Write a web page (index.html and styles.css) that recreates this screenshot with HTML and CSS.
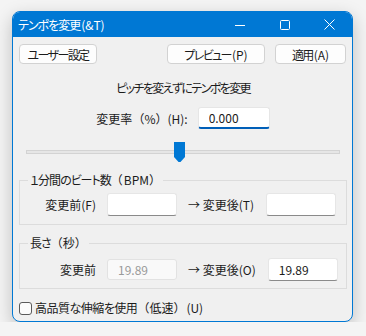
FILE: index.html
```html
<!DOCTYPE html>
<html lang="ja">
<head>
  <meta charset="UTF-8" />
  <title>テンポを変更</title>
  <link rel="stylesheet" href="styles.css">
</head>
<body>
  <div class="window">
    <div class="titlebar">
      <span class="title">テンポを変更<span class="lat">(&amp;T)</span></span>
      <div class="caption">
        <span class="cap-btn">
          <svg width="10" height="10" viewBox="0 0 10 10"><path d="M0 5.5 H10" stroke="#fff" stroke-width="1"/></svg>
        </span>
        <span class="cap-btn">
          <svg width="10" height="10" viewBox="0 0 10 10"><rect x="0.5" y="0.5" width="9" height="9" rx="1" fill="none" stroke="#fff" stroke-width="1"/></svg>
        </span>
        <span class="cap-btn">
          <svg width="11" height="11" viewBox="0 0 11 11"><path d="M0.5 0.5 L10.5 10.5 M10.5 0.5 L0.5 10.5" stroke="#fff" stroke-width="1"/></svg>
        </span>
      </div>
    </div>

    <div class="content">
      <div class="button-row">
        <button class="btn btn-user">ユーザー設定</button>
        <span class="spacer"></span>
        <button class="btn btn-preview">プレビュー<span class="lat">(P)</span></button>
        <button class="btn btn-apply">適用<span class="lat">(A)</span></button>
      </div>

      <p class="subtitle">ピッチを変えずにテンポを変更</p>

      <div class="rate-row">
        <label for="rate">変更率<span class="fw">（%）</span>(H):</label>
        <input type="text" id="rate" class="textbox focused" value="0.000" />
      </div>

      <div class="slider">
        <div class="track"></div>
        <svg class="thumb" style="left: 148px" width="11" height="20" viewBox="0 0 11 20"><path d="M0 0 H11 V15 L6.5 20 H4.5 L0 15 Z" fill="#0078d4"/></svg>
      </div>

      <fieldset class="group group-bpm">
        <legend>１分間のビート数<span class="fw">（</span><span class="lat">BPM</span><span class="fw">）</span></legend>
        <div class="field-row">
          <label for="bpmFrom" class="field-label">変更前(F)</label>
          <input type="text" id="bpmFrom" class="textbox" value="" />
          <label for="bpmTo" class="arrow-label">→ 変更後(T)</label>
          <input type="text" id="bpmTo" class="textbox" value="" />
        </div>
      </fieldset>

      <fieldset class="group group-length">
        <legend>長さ<span class="fw">（秒）</span></legend>
        <div class="field-row">
          <label for="lenFrom" class="field-label">変更前</label>
          <input type="text" id="lenFrom" class="textbox" value="19.89" disabled />
          <label for="lenTo" class="arrow-label">→ 変更後(O)</label>
          <input type="text" id="lenTo" class="textbox" value="19.89" />
        </div>
      </fieldset>

      <label class="check">
        <span class="box"></span>
        <span>高品質な伸縮を使用<span class="fw">（低速）</span><span class="lat">(U)</span></span>
      </label>
    </div>
  </div>
</body>
</html>
```

FILE: styles.css
```css
body {
  margin: 0;
  background: #f4f4f4;
  font-family: "Noto Sans CJK JP", sans-serif;
  font-size: 12px;
  font-feature-settings: "palt" 1;
  color: #1b1b1b;
}
.fw {
  font-feature-settings: normal;
  letter-spacing: 0;
}
.lat {
  letter-spacing: 0;
  margin-left: 1px;
}
.window {
  box-sizing: border-box;
  width: 341px;
  height: 311px;
  margin: 11px 0 0 12px;
  border: 1px solid #0078d4;
  border-radius: 8px;
  overflow: hidden;
  background: #f0f0f0;
  box-shadow: 0 6px 18px rgba(0, 0, 0, 0.22);
  display: flex;
  flex-direction: column;
}
.titlebar {
  flex-shrink: 0;
  height: 25px;
  background: #0078d4;
  display: flex;
  align-items: center;
  color: #fff;
}
.title {
  padding-left: 5px;
  line-height: 16px;
  letter-spacing: -1px;
}
.caption {
  margin-left: auto;
  display: flex;
  height: 100%;
}
.cap-btn {
  width: 45px;
  display: flex;
  align-items: center;
  justify-content: center;
}
.content {
  padding: 7px 5px 0 6px;
}
.button-row {
  display: flex;
  gap: 10px;
  padding-right: 1px;
}
.spacer {
  flex: 1;
}
.btn {
  height: 20px;
  padding: 0;
  font: inherit;
  letter-spacing: -1.6px;
  color: #1b1b1b;
  background: #fdfdfd;
  border: 1px solid #d2d2d2;
  border-radius: 4px;
}
.btn-user { width: 78px; }
.btn-preview { width: 98px; }
.btn-apply { width: 71px; }
.subtitle {
  margin: 16px 0 0;
  text-align: center;
  line-height: 16px;
  letter-spacing: -1.6px;
}
.rate-row {
  margin-top: 11px;
  display: flex;
  align-items: center;
  justify-content: center;
  gap: 10px;
}
.textbox {
  box-sizing: border-box;
  width: 70px;
  height: 23px;
  padding: 0 0 0 10px;
  font: inherit;
  color: #1b1b1b;
  background: #fff;
  border: 1px solid #e6e6e6;
  border-bottom-color: #8a8a8a;
  border-radius: 3px;
  outline: none;
  flex-shrink: 0;
}
.textbox.focused {
  width: 72px;
  height: 22px;
  border-bottom: 2px solid #005fb8;
}
.textbox:disabled {
  height: 21px;
  background: #f9f9f9;
  border-color: #e2e2e2;
  color: #9a9a9a;
}
.slider {
  position: relative;
  height: 20px;
  margin: 13px 7px 0 7px;
}
.track {
  position: absolute;
  left: 0;
  right: 0;
  top: 8px;
  height: 2px;
  background: #e6e6e6;
  border: 1px solid #d3d3d3;
}
.thumb {
  position: absolute;
  top: 0;
}
.group {
  margin: 10px 0 0;
  border: 1px solid #dcdcdc;
}
.group-bpm {
  padding: 5px 0 8px;
}
.group-length {
  margin-top: 10px;
  padding: 7px 0 7px;
}
.group legend {
  margin-left: 8px;
  padding: 0 2px;
  line-height: 16px;
  letter-spacing: -1px;
}
.field-row {
  display: flex;
  align-items: center;
  white-space: nowrap;
}
.field-label {
  width: 76px;
  flex-shrink: 0;
  text-align: right;
  margin-right: 11px;
}
.arrow-label {
  margin: 0 12px 0 11px;
}
.check {
  margin-top: 11px;
  display: flex;
  align-items: center;
  line-height: 16px;
  letter-spacing: -0.5px;
}
.box {
  box-sizing: border-box;
  width: 13px;
  height: 13px;
  margin: 0 3px 0 0;
  border: 1px solid #5a5a5a;
  border-radius: 3px;
  background: #fbfbfb;
}
```
